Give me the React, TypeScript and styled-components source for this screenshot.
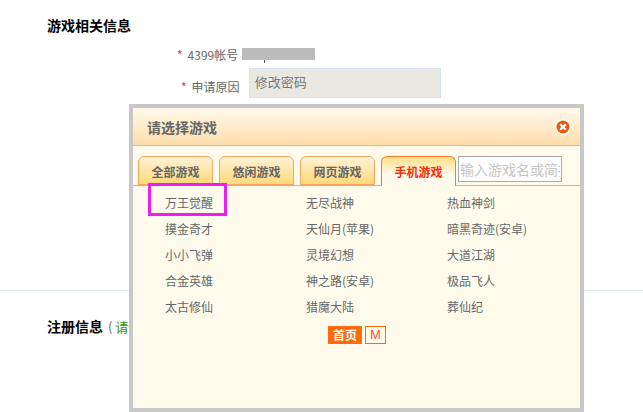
import React from "react";
import styled, { createGlobalStyle } from "styled-components";

const tabs = ["全部游戏", "悠闲游戏", "网页游戏", "手机游戏"];
const games = [
  "万王觉醒", "无尽战神", "热血神剑",
  "摸金奇才", "天仙月(苹果)", "暗黑奇迹(安卓)",
  "小小飞弹", "灵境幻想", "大道江湖",
  "合金英雄", "神之路(安卓)", "极品飞人",
  "太古修仙", "猎魔大陆", "葬仙纪",
];

const App: React.FC = () => {
  return (
    <Page>
      <GlobalStyle />
      <Section>
        <Heading>游戏相关信息</Heading>
        <AccountRow>
          <Star>*</Star>
          <Label>4399帐号</Label>
          <Masked />
        </AccountRow>
        <ReasonRow>
          <ReasonLabel>
            <Star>*</Star>
            <Label>申请原因</Label>
          </ReasonLabel>
          <Reason>修改密码</Reason>
        </ReasonRow>
      </Section>
      <Register>
        <Heading>注册信息</Heading>
        <Note>
          ( <NoteGreen>请仔细填写</NoteGreen>
        </Note>
      </Register>
      <Dialog>
        <DialogHeader>
          <DialogTitle>请选择游戏</DialogTitle>
          <CloseIcon width="16" height="16" viewBox="0 0 16 16">
            <circle cx="8" cy="8" r="8" fill="#fff" />
            <circle cx="8" cy="8" r="6.5" fill="#e8590c" />
            <path d="M5.2 5.2l5.6 5.6M10.8 5.2l-5.6 5.6" stroke="#fff" strokeWidth="2.2" />
          </CloseIcon>
        </DialogHeader>
        <TabBar>
          {tabs.map((tab, i) => (
            <Tab key={tab} $active={i === 3}>
              {tab}
            </Tab>
          ))}
          <Search placeholder="输入游戏名或简拼" />
        </TabBar>
        <GameGrid>
          {games.map((game) => (
            <Game key={game}>{game}</Game>
          ))}
        </GameGrid>
        <Pager>
          <PageCurrent>首页</PageCurrent>
          <PageLetter>M</PageLetter>
        </Pager>
        <Highlight />
      </Dialog>
    </Page>
  );
};

const GlobalStyle = createGlobalStyle`
  html, body {
    margin: 0;
    padding: 0;
    background: #fff;
  }
  body {
    font-family: "Noto Sans CJK SC", "Liberation Sans", sans-serif;
    color: #666;
  }
`;

const Page = styled.div`
  position: relative;
  width: 643px;
  height: 412px;
  overflow: hidden;
`;

const Section = styled.div`
  height: 291px;
  padding: 15px 0 0 47px;
  box-sizing: border-box;
  border-bottom: 1px solid #e2ecf5;
`;

const Heading = styled.h3`
  margin: 0;
  font-size: 14px;
  line-height: 20px;
  font-weight: 700;
  color: #000;
`;

const AccountRow = styled.div`
  display: flex;
  align-items: center;
  height: 20px;
  margin: 9px 0 0 130px;
  font-size: 12px;
`;

const ReasonRow = styled.div`
  display: flex;
  align-items: flex-start;
  height: 30px;
  margin: 4px 0 0 134px;
`;

const ReasonLabel = styled.div`
  display: flex;
  align-items: center;
  margin-top: 10px;
  font-size: 12px;
  line-height: 18px;
`;

const Star = styled.span`
  color: #e5304a;
  margin-right: 5px;
`;

const Label = styled.span`
  color: #666;
  white-space: nowrap;
`;

const Masked = styled.div`
  position: relative;
  width: 73px;
  height: 12px;
  margin-left: 4px;
  background: #bbb;

  &::after {
    content: "";
    position: absolute;
    left: 22px;
    top: 12px;
    width: 1px;
    height: 3px;
    background: #555;
  }
`;

const Reason = styled.div`
  width: 192px;
  height: 30px;
  box-sizing: border-box;
  margin-left: 9px;
  padding-left: 5px;
  background: #e9e9e2;
  border: 1px solid #d8e4f0;
  color: #777;
  font-size: 13px;
  line-height: 25px;
`;

const Register = styled.div`
  display: flex;
  align-items: center;
  padding: 25px 0 0 47px;
`;

const Note = styled.span`
  margin-left: 5px;
  font-size: 13px;
  color: #666;
`;

const NoteGreen = styled.span`
  color: #1a9a00;
`;

const Dialog = styled.div`
  position: absolute;
  left: 129px;
  top: 104px;
  width: 455px;
  height: 308px;
  box-sizing: border-box;
  border: 4px solid #c8c8c8;
  background: #fffbec;
`;

const DialogHeader = styled.div`
  display: flex;
  align-items: center;
  justify-content: space-between;
  height: 38px;
  box-sizing: border-box;
  padding: 0 9px 0 14px;
  background: linear-gradient(#fffaec, #fddcaa);
  border-bottom: 1px solid #f6b860;
`;

const DialogTitle = styled.span`
  font-size: 14px;
  font-weight: 700;
  color: #666;
`;

const CloseIcon = styled.svg`
  display: block;
`;

const TabBar = styled.div`
  display: flex;
  align-items: flex-start;
  height: 29px;
  margin-top: 10px;
  padding-left: 5px;
  border-bottom: 1px solid #f9a562;
`;

const Tab = styled.div<{ $active?: boolean }>`
  width: 75px;
  height: ${({ $active }) => ($active ? "30px" : "29px")};
  box-sizing: border-box;
  margin-right: 6px;
  text-align: center;
  font-size: 12px;
  font-weight: 700;
  line-height: 29px;
  border: 1px solid ${({ $active }) => ($active ? "#f37a2c" : "#f9a562")};
  border-bottom: ${({ $active }) => ($active ? "none" : "1px solid #f9a562")};
  border-radius: 6px 6px 0 0;
  color: ${({ $active }) => ($active ? "#ff2b00" : "#666")};
  background: ${({ $active }) =>
    $active ? "linear-gradient(#fedd84, #fffbec 60%)" : "linear-gradient(#fff3d6, #fed97a)"};
`;

const Search = styled.input`
  width: 104px;
  height: 26px;
  box-sizing: border-box;
  margin-left: -4px;
  padding: 0 1px;
  border: 1px solid #aaa;
  outline: none;
  background: #fff;
  font-family: inherit;
  font-size: 14px;
  font-weight: 400;
  &::placeholder {
    color: #c4c4c4;
    opacity: 1;
  }
`;

const GameGrid = styled.div`
  display: grid;
  grid-template-columns: repeat(3, 141px);
  grid-auto-rows: 26px;
  padding: 4px 0 0 32px;
`;

const Game = styled.div`
  font-size: 12px;
  line-height: 26px;
  color: #666;
  white-space: nowrap;
`;

const Pager = styled.div`
  display: flex;
  align-items: center;
  gap: 3px;
  margin: 6px 0 0 195px;
`;

const PageCurrent = styled.span`
  width: 34px;
  height: 18px;
  text-align: center;
  font-size: 12px;
  line-height: 18px;
  font-weight: 700;
  color: #fff;
  background: #ff6a0a;
`;

const PageLetter = styled.span`
  width: 21px;
  height: 18px;
  box-sizing: border-box;
  text-align: center;
  font-family: "Liberation Sans", sans-serif;
  font-size: 13px;
  line-height: 16px;
  color: #f4553a;
  border: 1px solid #ff6a0a;
`;

const Highlight = styled.div`
  position: absolute;
  left: 15px;
  top: 75px;
  width: 79px;
  height: 33px;
  box-sizing: border-box;
  border: 3px solid #f01df0;
`;

export default App;
